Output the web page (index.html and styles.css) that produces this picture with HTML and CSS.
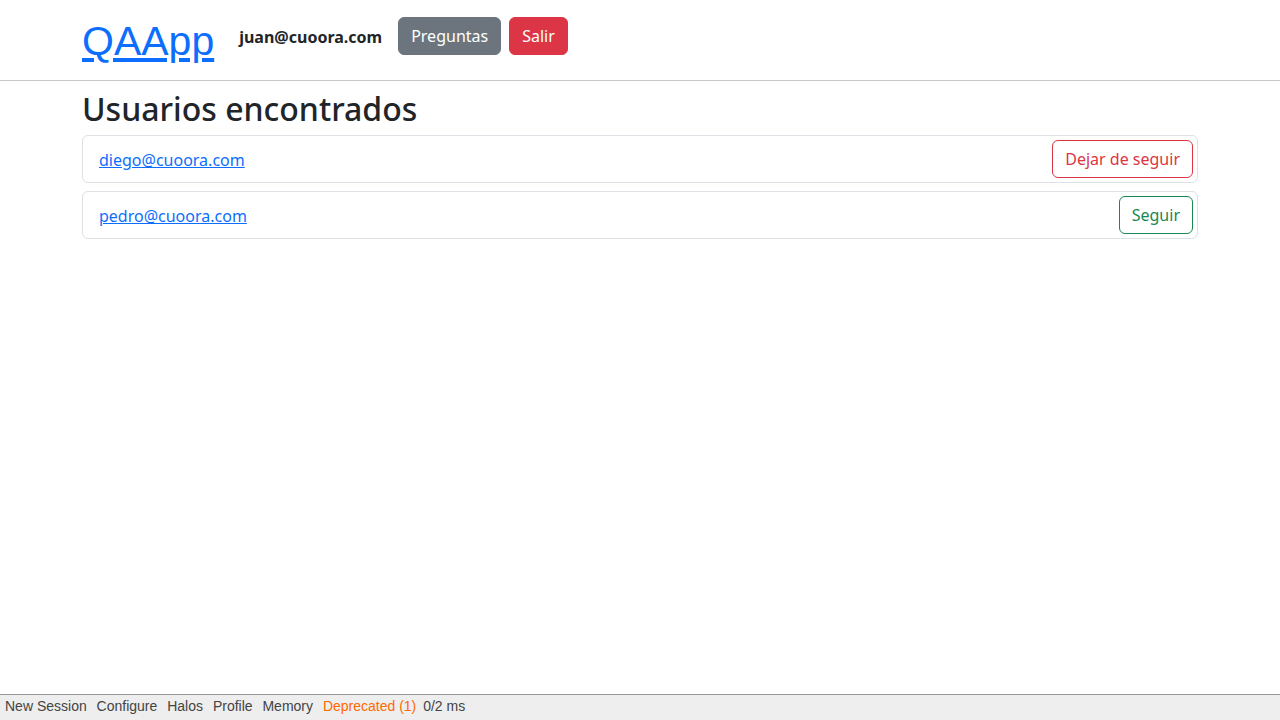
FILE: index.html
```html
<!DOCTYPE html>
<html lang="es">
<head>
<meta charset="utf-8">
<title>QAApp</title>
<link rel="stylesheet" href="styles.css">
</head>
<body>
<header class="topbar">
  <div class="container topbar-inner">
    <a class="brand" href="#">QAApp</a>
    <span class="user">juan@cuoora.com</span>
    <a class="btn btn-secondary" href="#">Preguntas</a>
    <a class="btn btn-danger" href="#">Salir</a>
  </div>
</header>
<main class="container main">
  <h2 class="title">Usuarios encontrados</h2>
  <div class="card">
    <a class="user-link" href="#">diego@cuoora.com</a>
    <a class="btn btn-outline-danger" href="#">Dejar de seguir</a>
  </div>
  <div class="card">
    <a class="user-link" href="#">pedro@cuoora.com</a>
    <a class="btn btn-outline-success" href="#">Seguir</a>
  </div>
</main>
<footer class="toolbar">
  <a href="#">New Session</a>
  <a href="#">Configure</a>
  <a href="#">Halos</a>
  <a href="#">Profile</a>
  <a href="#">Memory</a>
  <a href="#" class="warn">Deprecated (1)</a>
  <span>0/2 ms</span>
</footer>
</body>
</html>
```
FILE: styles.css
```css
* { box-sizing: border-box; }
html, body { margin: 0; padding: 0; }
body {
  font-family: "Noto Sans", "Liberation Sans", sans-serif;
  font-size: 16px;
  line-height: 1.5;
  color: #212529;
  background: #fff;
  min-height: 720px;
}
.container {
  width: 1140px;
  margin: 0 auto;
  padding: 0 12px;
}
.topbar {
  border-bottom: 1px solid #c8c8c8;
  height: 81px;
}
.topbar-inner {
  display: flex;
  align-items: flex-start;
  height: 80px;
}
.brand {
  font-family: "Liberation Sans", Arial, sans-serif;
  font-size: 41px;
  line-height: 1.2;
  color: #0d6efd;
  text-decoration: underline;
  margin-top: 17px;
  margin-right: 25px;
}
.user {
  font-weight: 700;
  margin-top: 25px;
  margin-right: 16px;
}
.btn {
  display: inline-block;
  font-size: 16px;
  line-height: 24px;
  padding: 6px 12px;
  border: 1px solid transparent;
  border-radius: 6px;
  text-decoration: none;
  white-space: nowrap;
}
.topbar-inner .btn { margin-top: 17px; margin-right: 8px; }
.btn-secondary { background: #6c757d; border-color: #6c757d; color: #fff; }
.btn-danger { background: #dc3545; border-color: #dc3545; color: #fff; }
.btn-outline-danger { color: #dc3545; border-color: #dc3545; background: #fff; }
.btn-outline-success { color: #198754; border-color: #198754; background: #fff; }
.main { padding-top: 8px; }
.title {
  font-size: 32px;
  font-weight: 500;
  line-height: 1.2;
  margin: 1px 0 7px;
}
.card {
  display: flex;
  align-items: center;
  justify-content: space-between;
  border: 1px solid #dee2e6;
  border-radius: 6px;
  padding: 4px 4px 4px 16px;
  margin-bottom: 8px;
}
.user-link { color: #0d6efd; text-decoration: underline; margin-top: 2px; }
.toolbar {
  position: fixed;
  left: 0;
  right: 0;
  bottom: 0;
  height: 26px;
  background: #eeeeee;
  border-top: 1px solid #999;
  display: flex;
  align-items: center;
  gap: 9.9px;
  padding: 0 0 3px 5px;
  font-family: "Liberation Sans", Arial, sans-serif;
  font-size: 14px;
  line-height: 16px;
  color: #444;
}
.toolbar a { color: #444; text-decoration: none; }
.toolbar a.warn { color: #ff6a00; }
.toolbar span { margin-left: -3px; }
```
